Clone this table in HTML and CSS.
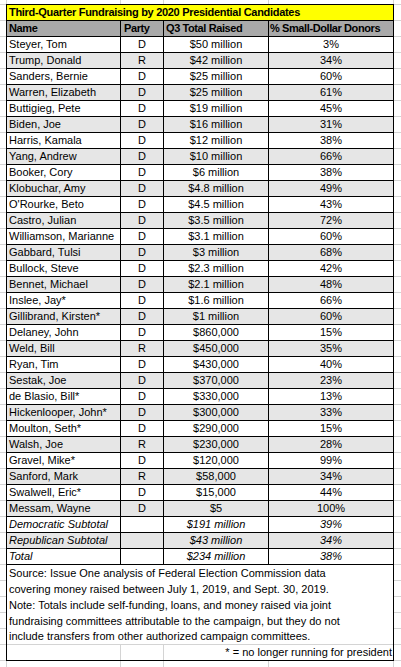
FILE: index.html
```html
<!DOCTYPE html>
<html lang="en">
<head>
<meta charset="utf-8">
<title>Third-Quarter Fundraising by 2020 Presidential Candidates</title>
<link rel="stylesheet" href="styles.css">
</head>
<body>
<div class="sheet">
  <div class="table">
    <div class="cell title">Third-Quarter Fundraising by 2020 Presidential Candidates</div>
    <div class="row head">
      <div class="cell">Name</div><div class="cell">Party</div><div class="cell">Q3 Total Raised</div><div class="cell">% Small-Dollar Donors</div>
    </div>
    <div class="row"><div class="cell">Steyer, Tom</div><div class="cell c">D</div><div class="cell c">$50 million</div><div class="cell c">3%</div></div>
    <div class="row alt"><div class="cell">Trump, Donald</div><div class="cell c">R</div><div class="cell c">$42 million</div><div class="cell c">34%</div></div>
    <div class="row"><div class="cell">Sanders, Bernie</div><div class="cell c">D</div><div class="cell c">$25 million</div><div class="cell c">60%</div></div>
    <div class="row alt"><div class="cell">Warren, Elizabeth</div><div class="cell c">D</div><div class="cell c">$25 million</div><div class="cell c">61%</div></div>
    <div class="row"><div class="cell">Buttigieg, Pete</div><div class="cell c">D</div><div class="cell c">$19 million</div><div class="cell c">45%</div></div>
    <div class="row alt"><div class="cell">Biden, Joe</div><div class="cell c">D</div><div class="cell c">$16 million</div><div class="cell c">31%</div></div>
    <div class="row"><div class="cell">Harris, Kamala</div><div class="cell c">D</div><div class="cell c">$12 million</div><div class="cell c">38%</div></div>
    <div class="row alt"><div class="cell">Yang, Andrew</div><div class="cell c">D</div><div class="cell c">$10 million</div><div class="cell c">66%</div></div>
    <div class="row"><div class="cell">Booker, Cory</div><div class="cell c">D</div><div class="cell c">$6 million</div><div class="cell c">38%</div></div>
    <div class="row alt"><div class="cell">Klobuchar, Amy</div><div class="cell c">D</div><div class="cell c">$4.8 million</div><div class="cell c">49%</div></div>
    <div class="row"><div class="cell">O'Rourke, Beto</div><div class="cell c">D</div><div class="cell c">$4.5 million</div><div class="cell c">43%</div></div>
    <div class="row alt"><div class="cell">Castro, Julian</div><div class="cell c">D</div><div class="cell c">$3.5 million</div><div class="cell c">72%</div></div>
    <div class="row"><div class="cell">Williamson, Marianne</div><div class="cell c">D</div><div class="cell c">$3.1 million</div><div class="cell c">60%</div></div>
    <div class="row alt"><div class="cell">Gabbard, Tulsi</div><div class="cell c">D</div><div class="cell c">$3 million</div><div class="cell c">68%</div></div>
    <div class="row"><div class="cell">Bullock, Steve</div><div class="cell c">D</div><div class="cell c">$2.3 million</div><div class="cell c">42%</div></div>
    <div class="row alt"><div class="cell">Bennet, Michael</div><div class="cell c">D</div><div class="cell c">$2.1 million</div><div class="cell c">48%</div></div>
    <div class="row"><div class="cell">Inslee, Jay*</div><div class="cell c">D</div><div class="cell c">$1.6 million</div><div class="cell c">66%</div></div>
    <div class="row alt"><div class="cell">Gillibrand, Kirsten*</div><div class="cell c">D</div><div class="cell c">$1 million</div><div class="cell c">60%</div></div>
    <div class="row"><div class="cell">Delaney, John</div><div class="cell c">D</div><div class="cell c">$860,000</div><div class="cell c">15%</div></div>
    <div class="row alt"><div class="cell">Weld, Bill</div><div class="cell c">R</div><div class="cell c">$450,000</div><div class="cell c">35%</div></div>
    <div class="row"><div class="cell">Ryan, Tim</div><div class="cell c">D</div><div class="cell c">$430,000</div><div class="cell c">40%</div></div>
    <div class="row alt"><div class="cell">Sestak, Joe</div><div class="cell c">D</div><div class="cell c">$370,000</div><div class="cell c">23%</div></div>
    <div class="row"><div class="cell">de Blasio, Bill*</div><div class="cell c">D</div><div class="cell c">$330,000</div><div class="cell c">13%</div></div>
    <div class="row alt"><div class="cell">Hickenlooper, John*</div><div class="cell c">D</div><div class="cell c">$300,000</div><div class="cell c">33%</div></div>
    <div class="row"><div class="cell">Moulton, Seth*</div><div class="cell c">D</div><div class="cell c">$290,000</div><div class="cell c">15%</div></div>
    <div class="row alt"><div class="cell">Walsh, Joe</div><div class="cell c">R</div><div class="cell c">$230,000</div><div class="cell c">28%</div></div>
    <div class="row"><div class="cell">Gravel, Mike*</div><div class="cell c">D</div><div class="cell c">$120,000</div><div class="cell c">99%</div></div>
    <div class="row alt"><div class="cell">Sanford, Mark</div><div class="cell c">R</div><div class="cell c">$58,000</div><div class="cell c">34%</div></div>
    <div class="row"><div class="cell">Swalwell, Eric*</div><div class="cell c">D</div><div class="cell c">$15,000</div><div class="cell c">44%</div></div>
    <div class="row alt"><div class="cell">Messam, Wayne</div><div class="cell c">D</div><div class="cell c">$5</div><div class="cell c">100%</div></div>
    <div class="row sub"><div class="cell">Democratic Subtotal</div><div class="cell c"></div><div class="cell c">$191 million</div><div class="cell c">39%</div></div>
    <div class="row sub alt"><div class="cell">Republican Subtotal</div><div class="cell c"></div><div class="cell c">$43 million</div><div class="cell c">34%</div></div>
    <div class="row sub"><div class="cell">Total</div><div class="cell c"></div><div class="cell c">$234 million</div><div class="cell c">38%</div></div>
    <div class="cell note">
      <div class="note-line">Source: Issue One analysis of Federal Election Commission data</div>
      <div class="note-line">covering money raised between July 1, 2019, and Sept. 30, 2019.</div>
      <div class="note-line">Note: Totals include self-funding, loans, and money raised via joint</div>
      <div class="note-line">fundraising committees attributable to the campaign, but they do not</div>
      <div class="note-line">include transfers from other authorized campaign committees.</div>
      <div class="star-row">
        <div class="star-cell"></div>
        <div class="star-cell"></div>
        <div class="star-cell star-text">* = no longer running for president</div>
      </div>
    </div>
  </div>
</div>
</body>
</html>
```
FILE: styles.css
```css
* { box-sizing: border-box; }

html, body {
  margin: 0;
  padding: 0;
  background: #fff;
}

body {
  font-family: "Liberation Sans", Arial, sans-serif;
  font-size: 11px;
  color: #000;
}

.sheet {
  width: 401px;
  height: 667px;
  overflow: hidden;
  padding: 4px 0 0 6px;
  background:
    linear-gradient(#d4d4d4, #d4d4d4) 6px 0 / 1px 100% no-repeat,
    linear-gradient(#d4d4d4, #d4d4d4) 120px 0 / 1px 100% no-repeat,
    linear-gradient(#d4d4d4, #d4d4d4) 163px 0 / 1px 100% no-repeat,
    linear-gradient(#d4d4d4, #d4d4d4) 268px 0 / 1px 100% no-repeat,
    linear-gradient(#d4d4d4, #d4d4d4) 393px 0 / 1px 100% no-repeat,
    repeating-linear-gradient(to bottom, #d4d4d4 0 1px, transparent 1px 16px) 0 4px / 100% 100% no-repeat,
    #fff;
}

.table {
  width: 388px;
  display: grid;
  grid-template-columns: 113px 42px 104px 124px;
  grid-auto-rows: 15px;
  gap: 1px;
  padding: 1px;
  background: #000;
}

.row { display: contents; }

.cell {
  background: #fff;
  padding: 0 2px;
  line-height: 15px;
  white-space: nowrap;
}

.row.alt .cell { background: #e6e6e6; }

.c { text-align: center; }

.title {
  grid-column: 1 / -1;
  background: #ffff00;
  font-weight: bold;
  letter-spacing: -0.3px;
}

.row.head .cell {
  background: #a9a9a9;
  font-weight: bold;
  letter-spacing: -0.4px;
}

.row.head .cell:nth-child(2) { padding-left: 3px; }
.row.head .cell:nth-child(4) { padding-left: 1px; }

.row.sub .cell { font-style: italic; }

.note {
  grid-column: 1 / -1;
  grid-row: span 6;
  padding: 0;
  display: flex;
  flex-direction: column;
}

.note-line {
  height: 16px;
  line-height: 16px;
  padding-left: 2px;
}

.note-line:nth-child(5) { height: 15px; line-height: 15px; }

.star-row {
  height: 16px;
  display: grid;
  grid-template-columns: 113px 43px 1fr;
  border-top: 1px solid #d4d4d4;
}

.star-cell + .star-cell { border-left: 1px solid #d4d4d4; }

.star-text {
  text-align: right;
  padding-right: 1px;
  line-height: 15px;
}
```
